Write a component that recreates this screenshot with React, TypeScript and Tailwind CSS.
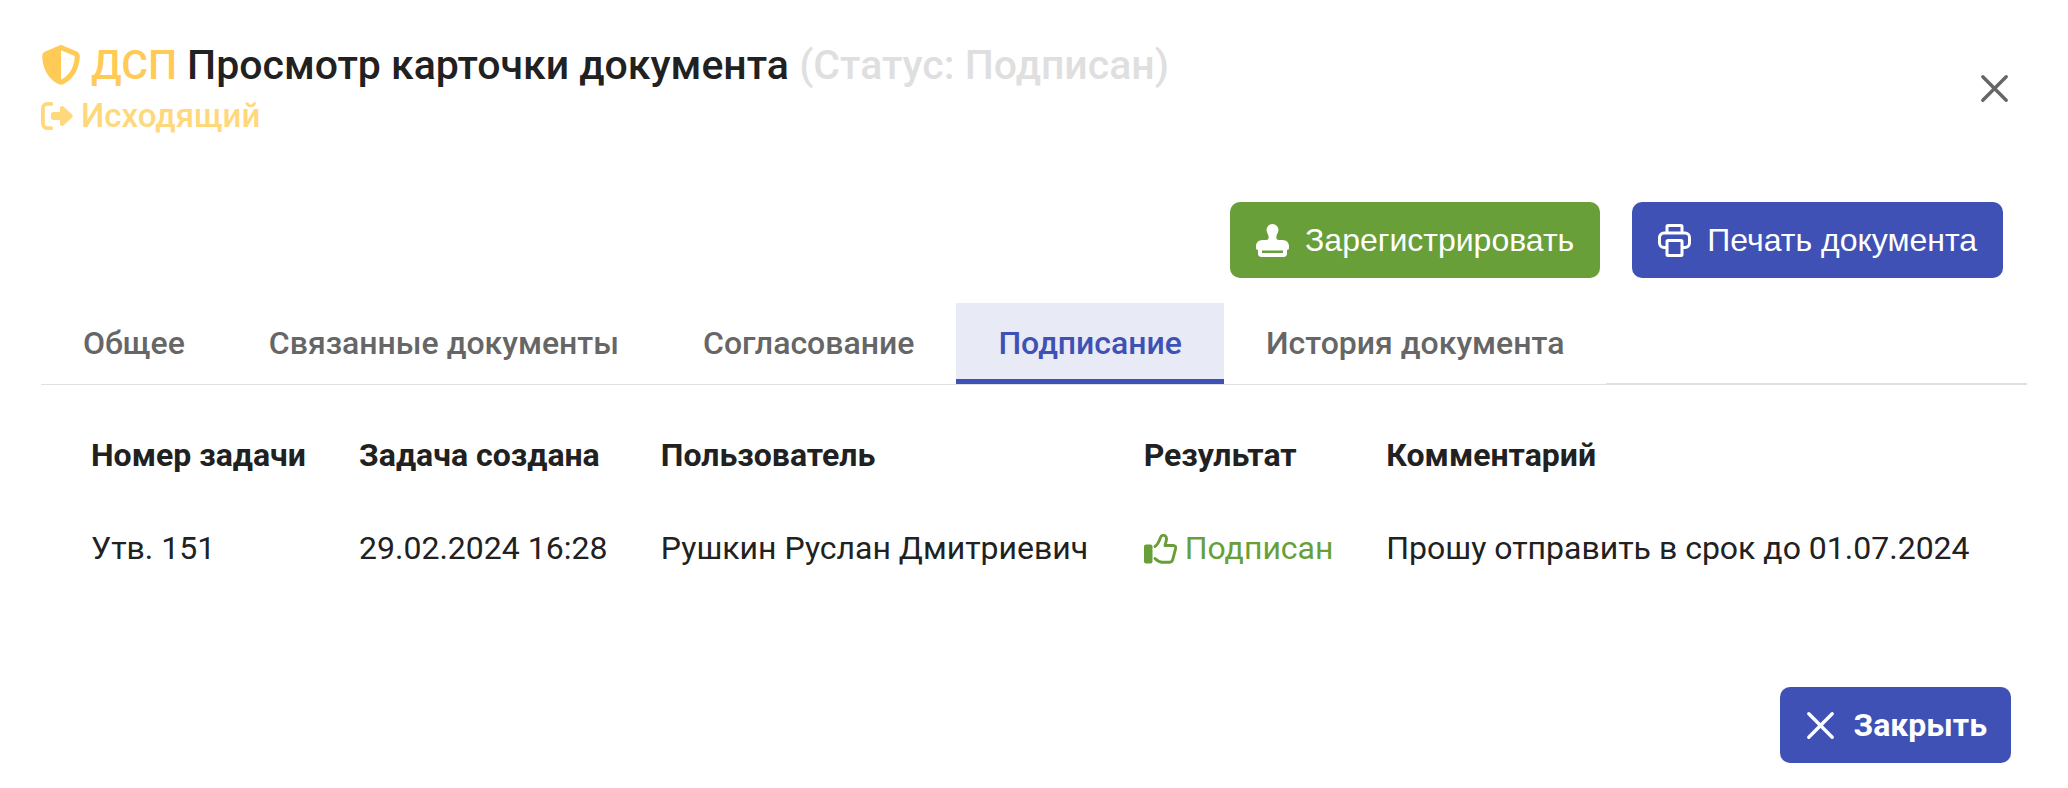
import { useState } from 'react';
import { FaShieldHalved } from 'react-icons/fa6';

const tabs = [
  'Общее',
  'Связанные документы',
  'Согласование',
  'Подписание',
  'История документа',
];

const columns = [
  'Номер задачи',
  'Задача создана',
  'Пользователь',
  'Результат',
  'Комментарий',
];

const tasks = [
  {
    id: 'Утв. 151',
    created: '29.02.2024 16:28',
    user: 'Рушкин Руслан Дмитриевич',
    result: 'Подписан',
    comment: 'Прошу отправить в срок до 01.07.2024',
  },
];

const CloseIcon = () => (
  <svg viewBox="0 0 33 33" className="size-[33px]" fill="none" aria-hidden="true">
    <path
      d="M4.800 4.800l23.400 23.400M28.200 4.800l-23.400 23.400"
      stroke="currentColor"
      strokeWidth="3.400"
      strokeLinecap="round"
    />
  </svg>
);

const OutgoingIcon = () => (
  <svg viewBox="0 0 32 28" className="h-[28px] w-[32px]" fill="none" aria-hidden="true">
    <path
      d="M10.200 1.900H6.400a4.500 4.500 0 0 0-4.500 4.500v15.200a4.500 4.500 0 0 0 4.500 4.500h3.800"
      stroke="currentColor"
      strokeWidth="3.800"
      strokeLinecap="round"
    />
    <path
      d="M12.500 10H19V6.300c0-2 2.200-2.900 3.600-1.500l8.500 7.800c.8.800.8 2 0 2.800l-8.500 7.800C21.200 24.600 19 23.700 19 21.700V18h-6.500a2.500 2.500 0 0 1-2.500-2.500v-3a2.500 2.500 0 0 1 2.500-2.500z"
      fill="currentColor"
    />
  </svg>
);

const StampIcon = () => (
  <svg viewBox="0 0 33 33" className="size-[33px]" aria-hidden="true">
    <path
      fill="currentColor"
      fillRule="evenodd"
      d="M16.500 0a6 6 0 0 1 6 6c0 2.600-2.200 4.500-2.200 7.500 0 1.700 1.100 2.500 2.700 2.500h3.500c4 0 6.500 2.800 6.500 5.800V24c0 1-.8 2-2 2v3.500c0 2-1.300 3.500-3.500 3.500h-22C3.300 33 2 31.500 2 29.500V26c-1.200 0-2-1-2-2v-2.200C0 18.800 2.500 16 6.500 16H10c1.600 0 2.700-.8 2.700-2.500 0-3-2.200-4.900-2.200-7.500a6 6 0 0 1 6-6zM6 26.500V29h21v-2.500z"
    />
  </svg>
);

const PrintIcon = () => (
  <svg
    viewBox="0 0 33 33"
    className="size-[33px]"
    fill="none"
    stroke="currentColor"
    strokeWidth="3"
    strokeLinejoin="round"
    aria-hidden="true"
  >
    <path d="M9 9V2.500a1 1 0 0 1 1-1h13a1 1 0 0 1 1 1V9" />
    <path d="M9 23.500H6a4.500 4.500 0 0 1-4.500-4.500v-5.500A4.500 4.500 0 0 1 6 9h21a4.500 4.500 0 0 1 4.500 4.500V19a4.500 4.500 0 0 1-4.500 4.500h-3" />
    <rect x="9" y="16.500" width="15" height="15" rx="1" />
  </svg>
);

const ThumbIcon = () => (
  <svg viewBox="0 0 33 30" className="h-[30px] w-[33px]" fill="none" aria-hidden="true">
    <rect x="0" y="10.500" width="8.500" height="19" rx="2" fill="currentColor" />
    <path
      d="M11 12.500c3-2 4-5 5.300-8.500 1-3 3-3.200 4.700-2.200 2.200 1.300 1.700 3.200 1.200 5l-1.200 4.700h8.300c1.800 0 2.700 1.500 2.300 3l-2.800 10.800c-.5 2-1.700 3-3.600 3H18c-3 0-5-2-7-3.800"
      stroke="currentColor"
      strokeWidth="2.900"
      strokeLinecap="round"
      strokeLinejoin="round"
    />
  </svg>
);

const App = () => {
  const [active, setActive] = useState(3);

  return (
    <main className="bg-white px-[41px] font-['Roboto',sans-serif] text-[32px] leading-[43px] text-[#212121]">
      <header className="flex items-center justify-between pt-[38px]">
        <div>
          <h1 className="flex items-center gap-[10px] text-[41px] leading-[54px] font-medium">
            <span className="flex items-center gap-[10px] text-[#ffca56]">
              <FaShieldHalved className="size-[40px]" />
              ДСП
            </span>
            <span>
              Просмотр карточки документа{' '}
              <span className="text-[#dfdfdf]">(Статус: Подписан)</span>
            </span>
          </h1>
          <p className="flex items-center gap-2 text-[33px] leading-[48px] font-medium text-[#ffd87c]">
            <OutgoingIcon />
            Исходящий
          </p>
        </div>
        <button type="button" aria-label="Закрыть" className="mr-4 pb-[2px] text-[#666666]">
          <CloseIcon />
        </button>
      </header>

      <div className="mt-[62px] flex justify-end gap-8 pr-6 font-['Liberation_Sans',sans-serif] text-white">
        <button
          type="button"
          className="flex h-[76px] items-center gap-4 rounded-[10px] bg-[#689f38] px-[26px]"
        >
          <StampIcon />
          Зарегистрировать
        </button>
        <button
          type="button"
          className="flex h-[76px] items-center gap-4 rounded-[10px] bg-[#3f51b5] px-[26px]"
        >
          <PrintIcon />
          Печать документа
        </button>
      </div>

      <div className="mt-[25px] flex">
        <div role="tablist" className="flex border-b border-[#e0e0e0] font-medium">
          {tabs.map((tab, index) => (
            <button
              key={tab}
              type="button"
              role="tab"
              aria-selected={active === index}
              onClick={() => setActive(index)}
              className={
                active === index
                  ? 'h-[81px] border-b-[5px] border-[#3f51b5] bg-[#e8eaf6] px-[42px] pt-[4px] text-[#3f51b5]'
                  : 'h-[81px] px-[42px] pb-[1px] text-[#666666]'
              }
            >
              {tab}
            </button>
          ))}
        </div>
        <div className="grow border-b-2 border-[#e0e0e0]" />
      </div>

      <div className="px-[25px] pt-6">
        <table className="w-full text-left">
          <thead>
            <tr>
              {columns.map((column) => (
                <th key={column} className="p-[25px] font-bold whitespace-nowrap">
                  {column}
                </th>
              ))}
            </tr>
          </thead>
          <tbody>
            {tasks.map((task) => (
              <tr key={task.id}>
                <td className="p-[25px] whitespace-nowrap">{task.id}</td>
                <td className="p-[25px] whitespace-nowrap">{task.created}</td>
                <td className="p-[25px] whitespace-nowrap">{task.user}</td>
                <td className="p-[25px] whitespace-nowrap">
                  <span className="flex items-center gap-2 text-[#689f38]">
                    <ThumbIcon />
                    {task.result}
                  </span>
                </td>
                <td className="p-[25px] whitespace-nowrap">{task.comment}</td>
              </tr>
            ))}
          </tbody>
        </table>
      </div>

      <footer className="mt-[92px] flex justify-end pr-4 pb-6">
        <button
          type="button"
          className="flex h-[76px] items-center gap-4 rounded-[10px] bg-[#3f51b5] px-6 font-bold text-white"
        >
          <CloseIcon />
          Закрыть
        </button>
      </footer>
    </main>
  );
};

export default App;
